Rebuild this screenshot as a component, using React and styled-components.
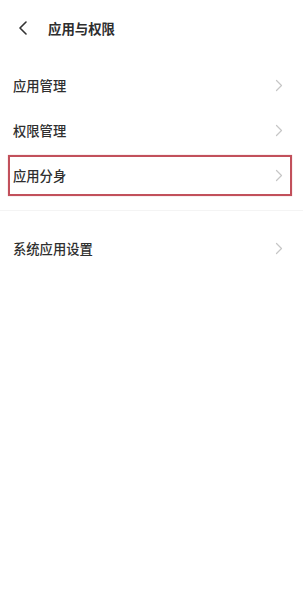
import React from "react";
import styled, { createGlobalStyle } from "styled-components";

const Global = createGlobalStyle`
  html, body { margin: 0; padding: 0; background: #fff; }
  body { font-family: "Noto Sans CJK SC", "Noto Sans", sans-serif; }
`;

const Page = styled.div`
  width: 303px;
  min-height: 600px;
  background: #fff;
  display: flex;
  flex-direction: column;
`;

const Header = styled.div`
  height: 56px;
  display: flex;
  align-items: center;
  padding-left: 17px;
  gap: 19px;
`;

const Title = styled.div`
  font-size: 13.4px;
  font-weight: 700;
  color: #2e2e2e;
`;

const List = styled.div`
  display: flex;
  flex-direction: column;
  padding-top: ${(p) => (p.$first ? "7px" : "0")};
`;

const Row = styled.div`
  position: relative;
  height: 45px;
  display: flex;
  align-items: center;
  justify-content: space-between;
  padding: 0 20px 0 13px;
  &::after {
    content: "";
    display: ${(p) => (p.$highlight ? "block" : "none")};
    position: absolute;
    top: 2px;
    bottom: 2px;
    left: 8px;
    right: 11px;
    border: 2px solid #c2505b;
    box-shadow: 0 0 1px rgba(194, 80, 91, 0.5);
  }
`;

const Label = styled.span`
  font-size: 13.3px;
  font-weight: 500;
  color: #2f2f2f;
`;

const Divider = styled.div`
  height: 1px;
  background: #f4f4f4;
  margin: 12px 0 15px;
`;

const Chevron = () => (
  <svg width="8" height="13" viewBox="0 0 8 13">
    <path d="M1.5 1.5 L6.5 6.5 L1.5 11.5" fill="none" stroke="#c6c6c6" strokeWidth="1.2" strokeLinecap="round" strokeLinejoin="round" />
  </svg>
);

const Back = () => (
  <svg width="12" height="14" viewBox="0 0 12 14">
    <path d="M9 1 L3 7 L9 13" fill="none" stroke="#333" strokeWidth="1.6" strokeLinecap="round" strokeLinejoin="round" />
  </svg>
);

const items = [
  { label: "应用管理" },
  { label: "权限管理" },
  { label: "应用分身", highlight: true },
];

export default function App() {
  return (
    <>
      <Global />
      <Page>
        <Header>
          <Back />
          <Title>应用与权限</Title>
        </Header>
        <List $first>
          {items.map((it) => (
            <Row key={it.label} $highlight={it.highlight}>
              <Label>{it.label}</Label>
              <Chevron />
            </Row>
          ))}
        </List>
        <Divider />
        <List>
          <Row>
            <Label>系统应用设置</Label>
            <Chevron />
          </Row>
        </List>
      </Page>
    </>
  );
}
